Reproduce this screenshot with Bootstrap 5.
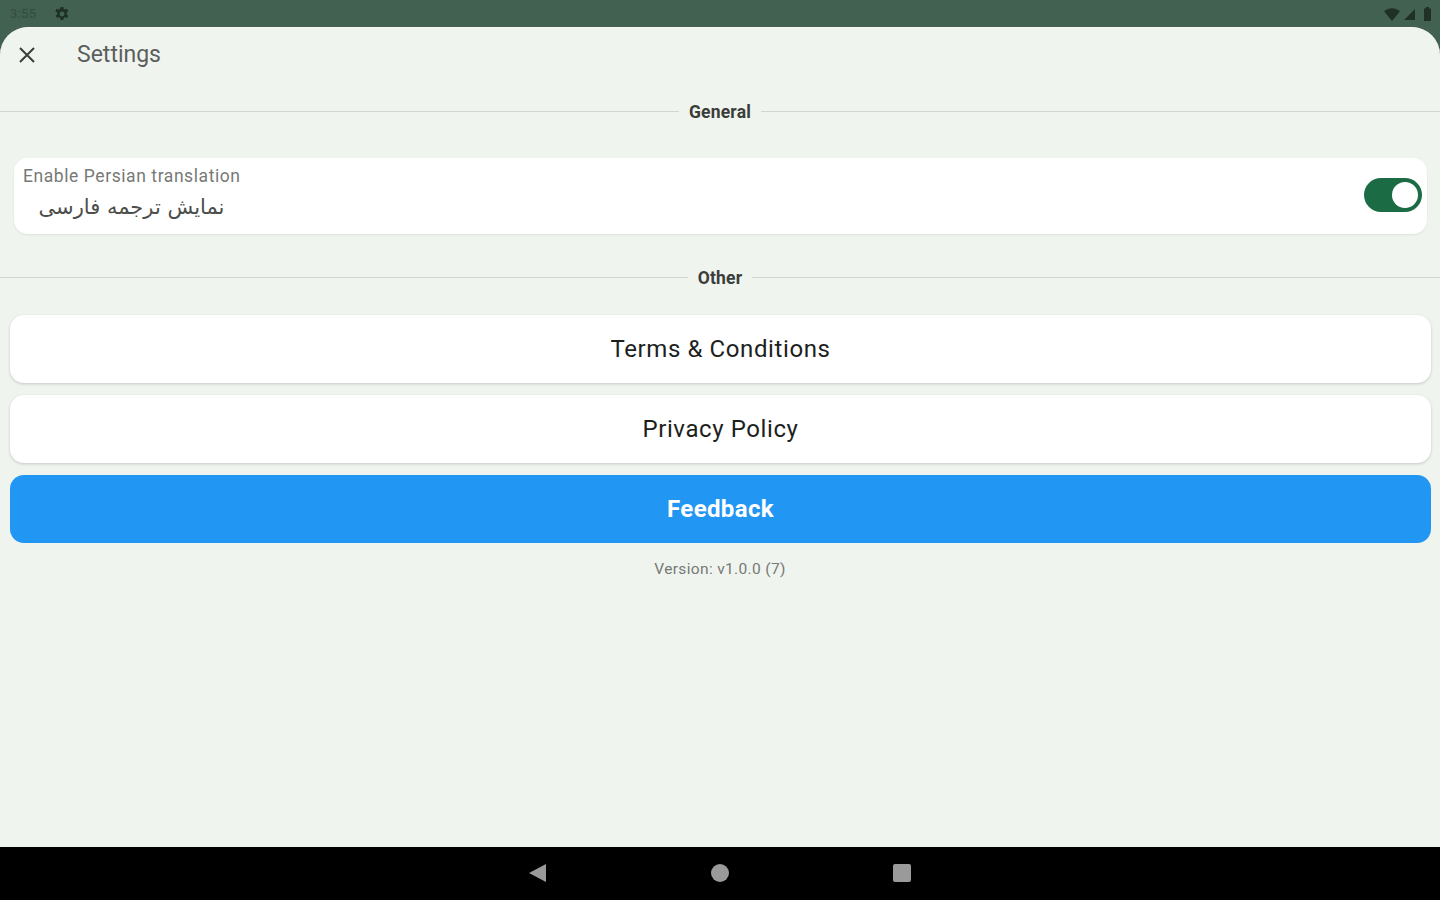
<!DOCTYPE html>
<html lang="en">
<head>
    <meta charset="UTF-8">
    <meta name="viewport" content="width=device-width, initial-scale=1.0">
    <title>Settings</title>
    <link rel="stylesheet" href="https://cdn.jsdelivr.net/npm/bootstrap@5.3.3/dist/css/bootstrap.min.css">
    <style>
        html, body { height: 100%; }
        body { background: #000; font-family: Roboto, "Liberation Sans", sans-serif; overflow: hidden; }
        .app-frame { height: 900px; background: #426150; }
        .status-row { height: 27px; padding: 1px 8px 0 10px; color: #26382e; }
        .status-time { font-size: 13px; width: 36px; opacity: .5; letter-spacing: .3px; }
        .sheet { height: 820px; background: #f0f4ef; border-radius: 28px 28px 0 0; border-top: 1px solid #f7f9f6; }
        .sheet-head { height: 54px; padding-left: 18px; }
        .sheet-title { font-size: 23px; color: #5c5f5c; margin-left: 41px; margin-bottom: 2px; line-height: 1; }
        .section-rule { height: 1px; background: #d3d6d2; flex: 1 1 0; }
        .section-head { height: 22px; }
        .section-head span { font-size: 17.5px; font-weight: 700; color: #3a3d3a; padding: 2px 10px 0; letter-spacing: .2px; }
        .head-general { margin-top: 18px; }
        .head-other { margin-top: 32px; }
        .pref-card { margin: 36px 13px 0 14px; height: 76px; background: #fff; border-radius: 14px; box-shadow: 0 1px 2px rgba(0,0,0,.08); padding: 8px 5px 0 9px; }
        .pref-label { font-size: 17.5px; color: #767976; line-height: 20px; letter-spacing: .57px; }
        .pref-fa { font-family: "DejaVu Sans", sans-serif; font-size: 21px; color: #4b4e4b; line-height: 30px; width: 217px; margin-top: 6px; text-align: center; }
        .toggle-track { width: 58px; height: 34px; border-radius: 17px; background: #1b6b45; position: relative; margin-top: -10px; }
        .toggle-knob { position: absolute; top: 4px; right: 4px; width: 26px; height: 26px; border-radius: 50%; background: #fff; }
        .action-stack { margin: 27px 9px 0 10px; gap: 12px; }
        .action-btn { height: 68px; width: 100%; border: 0; border-radius: 14px; background: #fff; color: #1d1f1d; font-size: 24px; letter-spacing: .6px; box-shadow: 0 1px 3px rgba(0,0,0,.18); }
        .action-btn.action-blue { background: #2196f3; color: #fff; font-weight: 700; letter-spacing: .35px; box-shadow: none; }
        .version-note { font-size: 15.5px; color: #767976; margin-top: 16px; line-height: 20px; letter-spacing: .35px; }
        .nav-strip { height: 53px; background: #000; padding-bottom: 1px; }
        .nav-slot { width: 182px; }
    </style>
</head>
<body>
    <div class="app-frame d-flex flex-column">
        <div class="status-row d-flex align-items-center">
            <span class="status-time">3:55</span>
            <svg width="16" height="16" viewBox="0 0 16 16" class="ms-2" fill="#1f3126">
                <path fill-rule="evenodd" d="M6.6 1h2.8l.4 2 1.2.6 1.9-.8 1.4 2.4-1.5 1.4v1.7l1.5 1.4-1.4 2.4-1.9-.8-1.2.6-.4 2H6.6l-.4-2-1.2-.6-1.9.8-1.400-2.4 1.500-1.4V6.6L1.2 5.2l1.4-2.4 1.9.8L5.700 3zM8 5.600a2.400 2.400 0 1 0 0 4.800 2.400 2.400 0 0 0 0-4.800z"/>
            </svg>
            <div class="ms-auto d-flex align-items-center gap-1">
                <svg width="16" height="13" viewBox="0 0 16 13" fill="#1f3126"><path d="M0 3.2C4.4-.8 11.600-.8 16 3.200L8 13z"/></svg>
                <svg width="11" height="11" viewBox="0 0 11 11" fill="#1f3126"><path d="M11 0v11H0z"/></svg>
                <svg width="9" height="14" viewBox="0 0 9 14" fill="#1f3126" class="ms-1"><path d="M3 0h3v1.500h2V14H1V1.500h2z"/></svg>
            </div>
        </div>

        <main class="sheet d-flex flex-column">
            <div class="sheet-head d-flex align-items-center">
                <svg width="18" height="18" viewBox="0 0 18 18" stroke="#3b3e3b" stroke-width="2" fill="none"><path d="M2 2l14 14M16 2L2 16"/></svg>
                <span class="sheet-title">Settings</span>
            </div>

            <div class="section-head head-general d-flex align-items-center">
                <div class="section-rule"></div><span>General</span><div class="section-rule"></div>
            </div>

            <div class="pref-card d-flex align-items-start justify-content-between">
                <div>
                    <div class="pref-label">Enable Persian translation</div>
                    <div class="pref-fa" dir="rtl" lang="fa">نمایش ترجمه فارسی</div>
                </div>
                <div class="toggle-track align-self-center"><div class="toggle-knob"></div></div>
            </div>

            <div class="section-head head-other d-flex align-items-center">
                <div class="section-rule"></div><span>Other</span><div class="section-rule"></div>
            </div>

            <div class="action-stack d-flex flex-column">
                <button type="button" class="btn action-btn">Terms &amp; Conditions</button>
                <button type="button" class="btn action-btn">Privacy Policy</button>
                <button type="button" class="btn action-btn action-blue">Feedback</button>
            </div>

            <div class="version-note text-center">Version: v1.0.0 (7)</div>
        </main>

        <div class="nav-strip d-flex align-items-center justify-content-center">
            <div class="nav-slot d-flex justify-content-center">
                <svg width="20" height="20" viewBox="0 0 20 20" fill="#9a9a9a"><path d="M1 10L18 1v18z"/></svg>
            </div>
            <div class="nav-slot d-flex justify-content-center">
                <svg width="20" height="20" viewBox="0 0 20 20" fill="#9a9a9a"><circle cx="10" cy="10" r="9"/></svg>
            </div>
            <div class="nav-slot d-flex justify-content-center">
                <svg width="20" height="20" viewBox="0 0 20 20" fill="#9a9a9a"><rect x="1" y="1" width="18" height="18" rx="2"/></svg>
            </div>
        </div>
    </div>
    <script src="https://cdn.jsdelivr.net/npm/bootstrap@5.3.3/dist/js/bootstrap.bundle.min.js"></script>
</body>
</html>
